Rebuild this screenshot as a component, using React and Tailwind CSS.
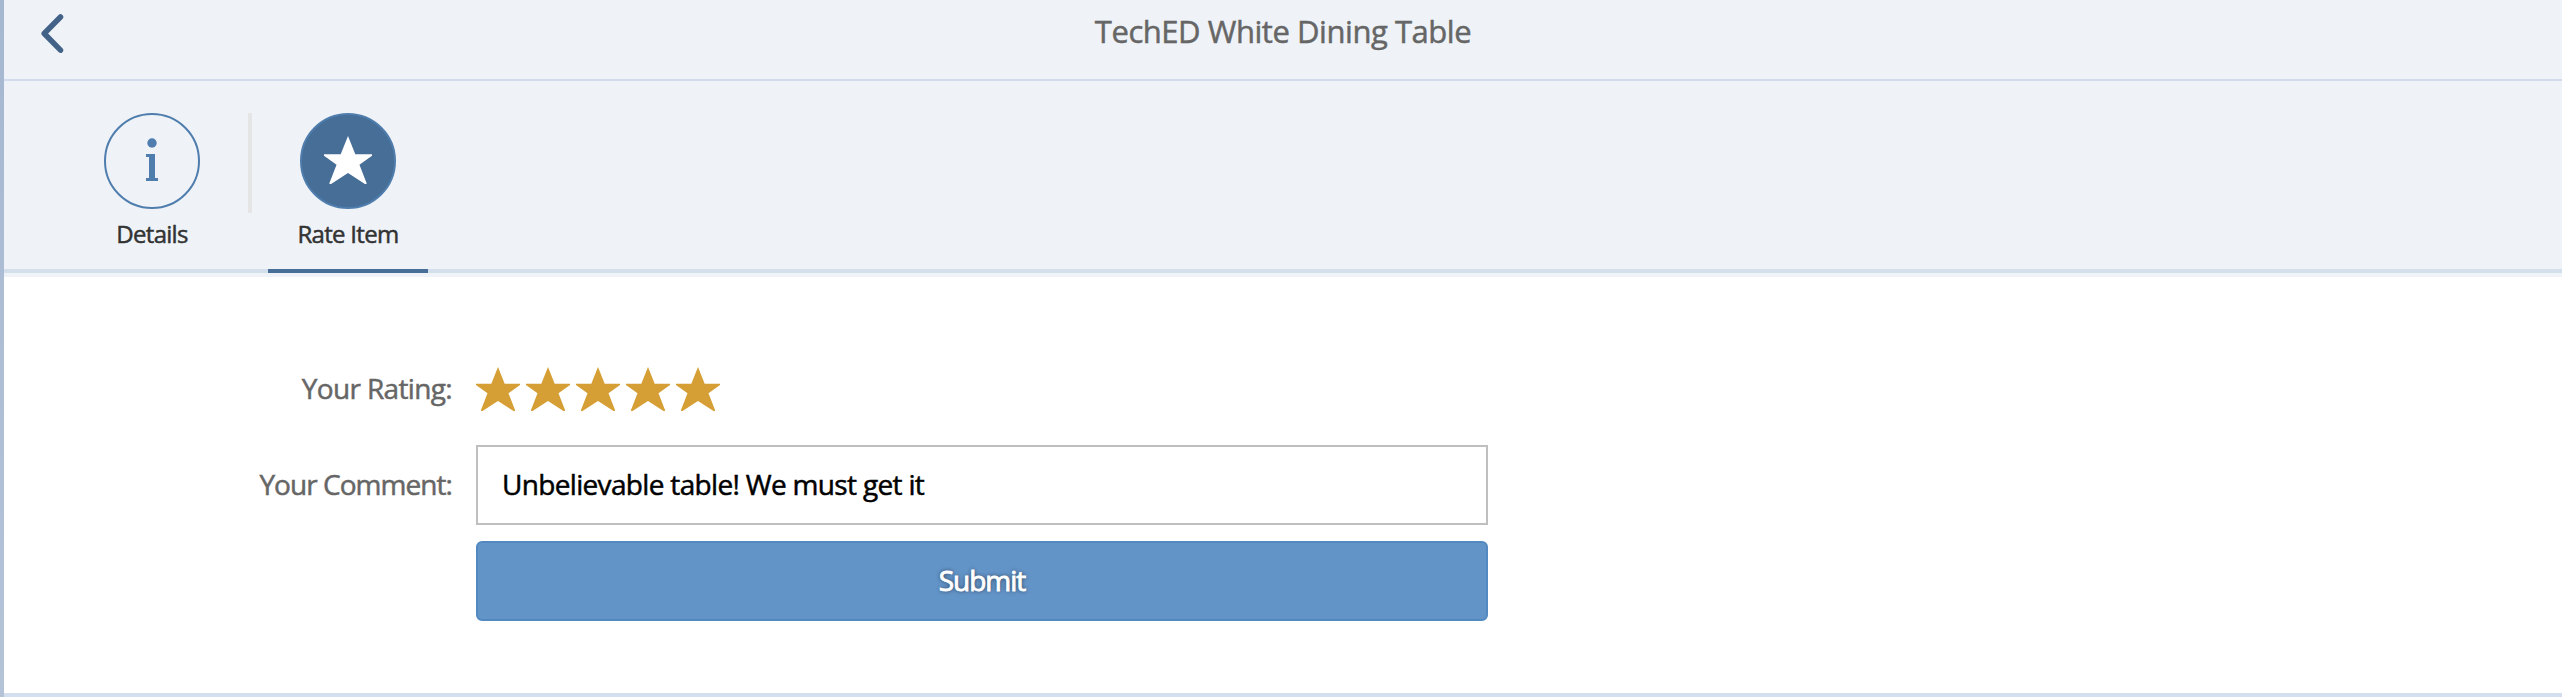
function Star({ className }) {
  return (
    <svg viewBox="0 0 44 44" className={className} fill="currentColor">
      <path d="M22 0L28.7 16.7H44V18L32.5 26.3L39 43V44H37.5L22 34L6.500 44H5V43L11.500 26.3L0 18V16.700H15.300Z" />
    </svg>
  );
}

function Tab({ label, selected, children }) {
  return (
    <div className="flex h-[160px] w-[160px] shrink-0 flex-col items-center">
      <div
        className={
          selected
            ? "flex size-24 shrink-0 items-center justify-center rounded-full border-2 border-[#4f7dad] bg-[#466e97] pb-0.5 text-white"
            : "flex size-24 shrink-0 items-center justify-center rounded-full border-2 border-[#4f7dad] pb-0.5 text-[#4f7dad]"
        }
      >
        {children}
      </div>
      <div className="mt-[7px] h-[53px] text-2xl leading-9 tracking-[-0.7px] whitespace-nowrap text-[#333333]">{label}</div>
      <div className={selected ? "h-1 w-full bg-[#466e97]" : "h-1 w-full"} />
    </div>
  );
}

export default function App() {
  return (
    <div className="flex h-[697px] w-full overflow-hidden bg-white font-['Open_Sans',sans-serif] [-webkit-text-stroke:0.5px]">
      <div className="w-1 shrink-0 bg-linear-to-b from-[#a5b8d1] to-[#b5c3d8]" />
      <div className="flex min-w-0 flex-1 flex-col border-b-4 border-[#d3dfee]">
        <header className="grid h-[81px] shrink-0 grid-cols-[1fr_auto_1fr] border-b-2 border-[#d1dded] bg-[#eff3f8]">
          <svg viewBox="0 0 24 40" className="mt-[14px] ml-[36px] h-10 w-6" fill="none" stroke="#426287" strokeWidth="5.500" strokeLinecap="round" strokeLinejoin="round">
            <path d="M24.300 3L8 19.500L24.300 36.200" transform="translate(-3.800 0)" />
          </svg>
          <h1 className="mt-[7px] text-[31px] leading-12 tracking-[-0.45px] text-[#666666]">TechED White Dining Table</h1>
        </header>
        <nav className="flex h-[192px] shrink-0 border-b-4 border-[#d3dfeb] bg-[#eff3f8] pt-8 pl-[68px]">
          <Tab label="Details">
            <svg viewBox="0 0 14 44" className="h-11 w-[14px]" fill="currentColor">
              <circle cx="7" cy="5" r="4.700" />
              <path d="M1 16H10V40H13V43H1V40H4V19H1Z" />
            </svg>
          </Tab>
          <div className="mr-4 ml-4 h-[100px] w-1 bg-[#e5e5e5]" />
          <Tab label="Rate Item" selected>
            <Star className="size-12" />
          </Tab>
        </nav>
        <div className="h-1 shrink-0 bg-[#eff3f8]" />
        <form className="grid grid-cols-[448px_1012px] gap-x-6 pt-[78px] text-[28px] leading-10">
          <label className="pt-[13px] text-right tracking-[-0.65px] text-[#666666]">Your Rating:</label>
          <div className="mb-[34px] flex gap-[6px] pt-3 text-[#d59f35]">
            {[1, 2, 3, 4, 5].map((n) => (
              <Star key={n} className="size-11" />
            ))}
          </div>
          <label className="pt-[19px] text-right tracking-[-0.95px] text-[#666666]">Your Comment:</label>
          <div className="flex h-20 items-center border-2 border-[#bfbfbf] pb-0.5 pl-6 tracking-[-0.67px] text-black">Unbelievable table! We must get it</div>
          <button type="button" className="col-start-2 mt-4 h-20 rounded-md border-2 border-[#5389c1] bg-[#6394c8] pb-0.5 tracking-[-1px] text-white [-webkit-text-stroke:0.9px] text-shadow-[0_0_4px_rgba(0,0,0,0.7)]">Submit</button>
        </form>
      </div>
    </div>
  );
}
